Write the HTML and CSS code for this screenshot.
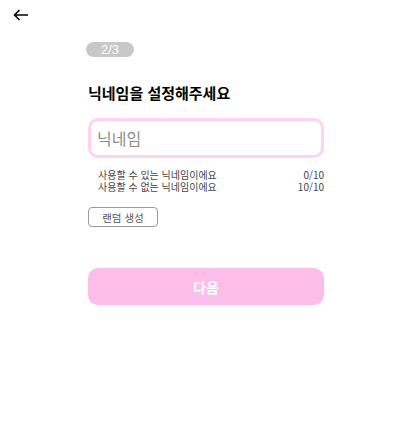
FILE: index.html
```html
<!DOCTYPE html>
<html lang="ko">
  <head>
    <meta charset="UTF-8" />
    <title>닉네임 설정</title>
    <link rel="stylesheet" href="styles.css">
  </head>

  <body>
    <header class="top">
      <button class="top__back" aria-label="뒤로">
        <svg width="16" height="12" viewBox="0 0 16 12" fill="none" stroke="#000" stroke-width="1.6">
          <path d="M15 6H1.5M6.5 1L1.5 6l5 5" />
        </svg>
      </button>
    </header>

    <main class="signup">
      <span class="signup__step">2/3</span>

      <h1 class="signup__title">닉네임을 설정해주세요</h1>

      <input class="signup__input" type="text" placeholder="닉네임" />

      <ul class="signup__rules">
        <li class="signup__rule"><span>사용할 수 있는 닉네임이에요</span><span>0/10</span></li>
        <li class="signup__rule"><span>사용할 수 없는 닉네임이에요</span><span>10/10</span></li>
      </ul>

      <button class="signup__random">랜덤 생성</button>

      <button class="signup__next" disabled>다음</button>
    </main>
  </body>
</html>
```

FILE: styles.css
```css
* {
  box-sizing: border-box;
}

body {
  margin: 0;
  font-family: "Noto Sans CJK KR", "Noto Sans", sans-serif;
  color: #000;
  background: #fff;
}

button {
  font-family: inherit;
}

.top {
  height: 30px;
  padding: 9px 0 0 13px;
}

.top__back {
  display: flex;
  padding: 0;
  border: 0;
  background: none;
}

.signup {
  width: 236px;
  margin: 0 auto;
  display: flex;
  flex-direction: column;
  align-items: flex-start;
}

.signup__step {
  margin-top: 12px;
  margin-left: -2px;
  width: 48px;
  height: 15px;
  border-radius: 8px;
  background: #c8c8c8;
  color: #fff;
  font-family: "Liberation Sans", sans-serif;
  font-size: 13px;
  line-height: 15px;
  text-align: center;
}

.signup__title {
  margin: 25px 0 0;
  font-size: 15px;
  font-weight: 700;
  line-height: 22px;
}

.signup__input {
  margin-top: 14px;
  width: 236px;
  height: 40px;
  border: 3px solid #fcd3f0;
  border-radius: 10px;
  padding: 0 6px;
  font-family: inherit;
  font-size: 16px;
  outline: none;
}

.signup__input::placeholder {
  color: #8c8c8c;
}

.signup__rules {
  list-style: none;
  margin: 11px 0 0;
  padding: 0 0 0 10px;
  width: 100%;
}

.signup__rule {
  display: flex;
  justify-content: space-between;
  font-size: 10px;
  line-height: 12px;
  color: #444;
}

.signup__random {
  margin-top: 14px;
  width: 70px;
  height: 20px;
  padding: 0;
  border: 1px solid #9a9a9a;
  border-radius: 4px;
  background: #fff;
  color: #555;
  font-size: 10.5px;
}

.signup__next {
  margin-top: 41px;
  width: 236px;
  height: 37px;
  border: 0;
  border-radius: 10px;
  background: #fdbdea;
  color: #fff;
  font-size: 14px;
  font-weight: 700;
}
```
